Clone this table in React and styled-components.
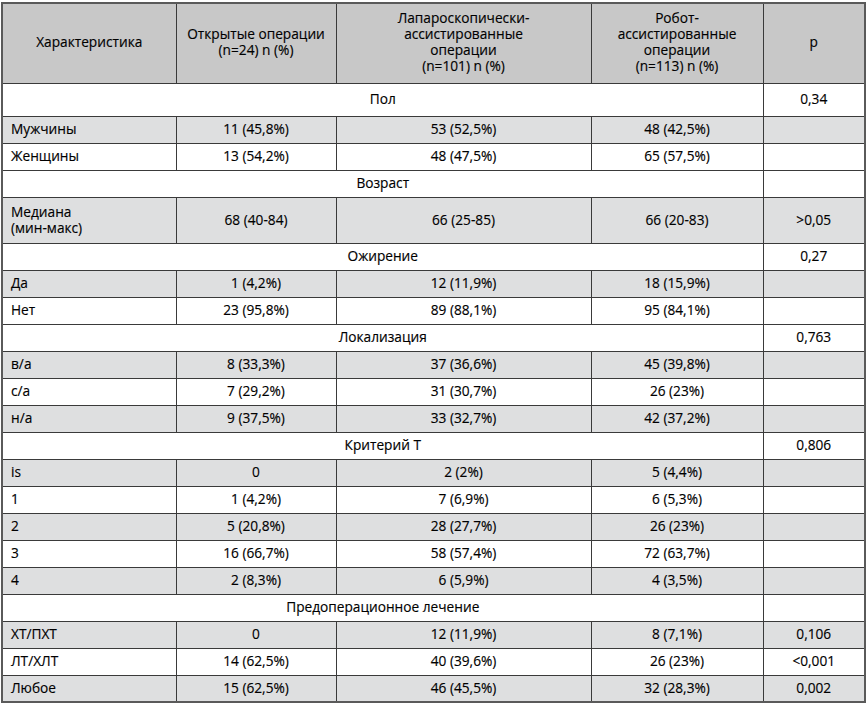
import React from 'react';
import styled, { createGlobalStyle } from 'styled-components';

const GlobalStyle = createGlobalStyle`
  html, body {
    margin: 0;
    padding: 0;
    background: #ffffff;
  }
  body {
    font-family: 'Open Sans', 'Noto Sans', sans-serif;
    color: #000000;
  }
`;

const Wrap = styled.div`
  padding: 2px 4px 0 1px;
`;

const Table = styled.table`
  width: 863px;
  border-collapse: collapse;
  border: 2px solid #5a5a5a;
  font-size: 13.7px;
  line-height: 16px;
  table-layout: fixed;
  -webkit-text-stroke: 0.15px #000;
`;

const HeadRow = styled.tr`
  height: 80px;
  background: #c8c8c8;
`;

const HeadCell = styled.th`
  border: 1px solid #3a3a3a;
  font-weight: 400;
  text-align: center;
  vertical-align: middle;
  padding: 0 4px 2px;
`;

const Row = styled.tr`
  height: ${(p) => p.$h || 27}px;
  background: ${(p) => (p.$shade ? '#dedfe0' : '#ffffff')};
`;

const Cell = styled.td`
  border: 1px solid #3a3a3a;
  padding: 0 8px 1px;
  text-align: ${(p) => (p.$left ? 'left' : 'center')};
  vertical-align: middle;
`;

const sections = [
  {
    title: 'Пол',
    p: '0,34',
    h: 33,
    rows: [
      ['Мужчины', '11 (45,8%)', '53 (52,5%)', '48 (42,5%)', ''],
      ['Женщины', '13 (54,2%)', '48 (47,5%)', '65 (57,5%)', ''],
    ],
  },
  {
    title: 'Возраст',
    p: '',
    rows: [['Медиана\n(мин-макс)', '68 (40-84)', '66 (25-85)', '66 (20-83)', '>0,05']],
  },
  {
    title: 'Ожирение',
    p: '0,27',
    rows: [
      ['Да', '1 (4,2%)', '12 (11,9%)', '18 (15,9%)', ''],
      ['Нет', '23 (95,8%)', '89 (88,1%)', '95 (84,1%)', ''],
    ],
  },
  {
    title: 'Локализация',
    p: '0,763',
    rows: [
      ['в/а', '8 (33,3%)', '37 (36,6%)', '45 (39,8%)', ''],
      ['с/а', '7 (29,2%)', '31 (30,7%)', '26 (23%)', ''],
      ['н/а', '9 (37,5%)', '33 (32,7%)', '42 (37,2%)', ''],
    ],
  },
  {
    title: 'Критерий Т',
    p: '0,806',
    rows: [
      ['is', '0', '2 (2%)', '5 (4,4%)', ''],
      ['1', '1 (4,2%)', '7 (6,9%)', '6 (5,3%)', ''],
      ['2', '5 (20,8%)', '28 (27,7%)', '26 (23%)', ''],
      ['3', '16 (66,7%)', '58 (57,4%)', '72 (63,7%)', ''],
      ['4', '2 (8,3%)', '6 (5,9%)', '4 (3,5%)', ''],
    ],
  },
  {
    title: 'Предоперационное лечение',
    p: '',
    rows: [
      ['ХТ/ПХТ', '0', '12 (11,9%)', '8 (7,1%)', '0,106'],
      ['ЛТ/ХЛТ', '14 (62,5%)', '40 (39,6%)', '26 (23%)', '<0,001'],
      ['Любое', '15 (62,5%)', '46 (45,5%)', '32 (28,3%)', '0,002'],
    ],
  },
];

function Label({ text }) {
  const parts = text.split('\n');
  return parts.map((t, i) => (
    <React.Fragment key={i}>
      {i > 0 && <br />}
      {t}
    </React.Fragment>
  ));
}

export default function App() {
  return (
    <Wrap>
      <GlobalStyle />
      <Table>
        <colgroup>
          <col style={{ width: 174 }} />
          <col style={{ width: 160 }} />
          <col style={{ width: 255 }} />
          <col style={{ width: 172 }} />
          <col style={{ width: 102 }} />
        </colgroup>
        <thead>
          <HeadRow>
            <HeadCell>Характеристика</HeadCell>
            <HeadCell>
              Открытые операции
              <br />
              (n=24) n (%)
            </HeadCell>
            <HeadCell>
              Лапароскопически-
              <br />
              ассистированные
              <br />
              операции
              <br />
              (n=101) n (%)
            </HeadCell>
            <HeadCell>
              Робот-
              <br />
              ассистированные
              <br />
              операции
              <br />
              (n=113) n (%)
            </HeadCell>
            <HeadCell>p</HeadCell>
          </HeadRow>
        </thead>
        <tbody>
          {sections.map((s) => (
            <React.Fragment key={s.title}>
              <Row $h={s.h}>
                <Cell colSpan={4}>{s.title}</Cell>
                <Cell>{s.p}</Cell>
              </Row>
              {s.rows.map((r, i) => (
                <Row key={r[0]} $shade={i % 2 === 0} $h={r[0].includes('\n') ? 46 : undefined}>
                  <Cell $left>
                    <Label text={r[0]} />
                  </Cell>
                  <Cell>{r[1]}</Cell>
                  <Cell>{r[2]}</Cell>
                  <Cell>{r[3]}</Cell>
                  <Cell>{r[4]}</Cell>
                </Row>
              ))}
            </React.Fragment>
          ))}
        </tbody>
      </Table>
    </Wrap>
  );
}
